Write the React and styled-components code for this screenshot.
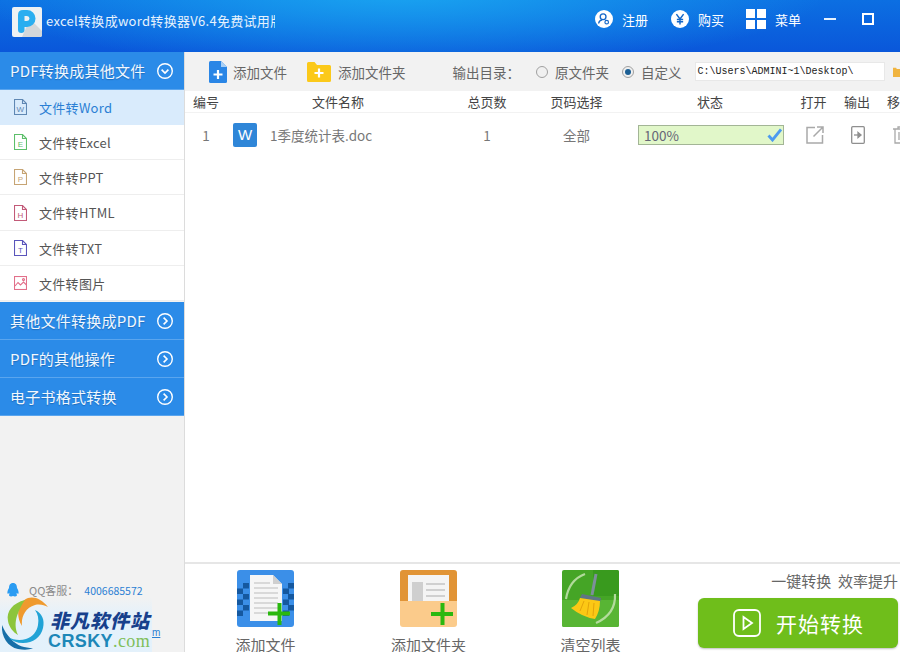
import React from "react";
import styled, { createGlobalStyle } from "styled-components";

const GlobalStyle = createGlobalStyle`
  html, body {
    margin: 0;
    padding: 0;
    background: #fff;
    overflow: hidden;
  }
  * {
    box-sizing: border-box;
  }
  body {
    font-family: "Noto Sans CJK SC", "Noto Sans", sans-serif;
  }
`;

const Window = styled.div`
  position: relative;
  width: 900px;
  height: 652px;
  overflow: hidden;
  display: flex;
  flex-direction: column;
`;

const TitleBar = styled.header`
  height: 52px;
  flex: none;
  display: flex;
  align-items: flex-start;
  padding: 7px 0 0 12px;
  color: #fff;
  background: radial-gradient(ellipse 430px 80px at 400px -10px, #1aa6f1 0%, rgba(26, 166, 241, 0) 100%),
    linear-gradient(180deg, #0c6fe2 0%, #0a57da 100%);
`;

const AppLogo = styled.div`
  width: 30px;
  height: 30px;
  flex: none;
`;

const AppTitle = styled.div`
  width: 229px;
  margin: 5px 0 0 4px;
  font-size: 13px;
  line-height: 18px;
  letter-spacing: 0.3px;
  white-space: nowrap;
  overflow: hidden;
  color: #e6f2fd;
`;

const TitleActions = styled.div`
  margin-left: auto;
  display: flex;
  align-items: center;
  height: 24px;
`;

const TitleAction = styled.div`
  display: flex;
  align-items: center;
  gap: 9px;
  font-size: 13px;
  margin-right: ${(p) => p.$after}px;
`;

const Body = styled.div`
  flex: 1;
  display: flex;
  min-height: 0;
`;

const Sidebar = styled.aside`
  width: 185px;
  flex: none;
  background: #f2f2f2;
  border-right: 1px solid #dcdcdc;
`;

const GroupHead = styled.div`
  height: 38px;
  display: flex;
  align-items: center;
  justify-content: space-between;
  padding: 0 10px 0 10px;
  background: #2b8be8;
  border-bottom: 1px solid #5aa5ee;
  color: #f2f8fe;
  font-size: 15px;
  letter-spacing: 0.25px;
  text-shadow: 0 1px 1px rgba(0, 50, 110, 0.35);
`;

const NavItem = styled.div`
  height: ${(p) => (p.$tall ? 36 : 35)}px;
  display: flex;
  align-items: center;
  gap: 12px;
  padding-left: 14px;
  font-size: 13px;
  letter-spacing: 0.3px;
  color: ${(p) => (p.$active ? "#2b7fd4" : "#555")};
  background: ${(p) => (p.$active ? "#d9ebfc" : "#fff")};
  border-bottom: 1px solid ${(p) => (p.$active ? "#d9ebfc" : "#eeeeee")};
`;

const NavGap = styled.div`
  height: 1px;
`;

const Main = styled.main`
  flex: 1;
  min-width: 0;
  display: flex;
  flex-direction: column;
  background: #fff;
`;

const Toolbar = styled.div`
  height: 39px;
  flex: none;
  display: flex;
  align-items: center;
  padding-left: 24px;
  background: #f2f2f2;
  font-size: 13.5px;
  color: #666;
  white-space: nowrap;
`;

const ToolButton = styled.div`
  display: flex;
  align-items: center;
  gap: ${(p) => p.$gap}px;
  margin-right: ${(p) => p.$after}px;
`;

const RadioOption = styled.div`
  display: flex;
  align-items: center;
  gap: 7px;
  margin-right: ${(p) => p.$after}px;
`;

const Radio = styled.span`
  width: 12px;
  height: 12px;
  flex: none;
  border-radius: 50%;
  border: 1px solid #a0a0a0;
  background: #f0f0f0;
  display: flex;
  align-items: center;
  justify-content: center;
  &::after {
    content: "";
    width: 6px;
    height: 6px;
    border-radius: 50%;
    background: ${(p) => (p.$on ? "#1c5f94" : "transparent")};
  }
`;

const PathInput = styled.div`
  width: 190px;
  height: 19px;
  flex: none;
  margin-right: 8px;
  padding-left: 2px;
  background: #fff;
  border: 1px solid #e8e8e8;
  font-family: "Liberation Mono", monospace;
  font-size: 10px;
  line-height: 17px;
  color: #222;
`;

const Row = styled.div`
  display: grid;
  grid-template-columns: 42px 222px 76px 103px 164px 43px 44px 21px;
  align-items: center;
  justify-items: center;
  white-space: nowrap;
`;

const HeadRow = styled(Row)`
  height: 22px;
  flex: none;
  font-size: 13px;
  color: #444;
  border-bottom: 1px solid #f2f2f2;
`;

const LastHead = styled.span`
  justify-self: start;
  margin-left: 8px;
`;

const FileRow = styled(Row)`
  height: 44px;
  flex: none;
  font-size: 13.5px;
  color: #777;
`;

const NameCell = styled.div`
  justify-self: start;
  display: flex;
  align-items: center;
  gap: 13px;
  padding-left: 6px;
`;

const WordBadge = styled.div`
  width: 24px;
  height: 24px;
  border-radius: 2px;
  background: #2f86d8;
  color: #fff;
  font-family: "Liberation Sans", sans-serif;
  font-size: 15px;
  line-height: 24px;
  text-align: center;
`;

const Progress = styled.div`
  width: 146px;
  height: 20px;
  margin-left: 2px;
  padding: 0 1px 0 5px;
  display: flex;
  align-items: center;
  justify-content: space-between;
  background: #e1f7c9;
  border: 1px solid #a3b596;
  color: #667;
  font-size: 13.5px;
`;

const RowIcon = styled.div`
  display: flex;
  margin-left: 2px;
`;

const TrashCell = styled.div`
  display: flex;
  justify-self: start;
  margin-left: 14px;
`;

const Spacer = styled.div`
  flex: 1;
`;

const Footer = styled.div`
  height: 90px;
  flex: none;
  display: flex;
  border-top: 2px solid #e6e6e6;
`;

const FooterTool = styled.div`
  width: 57px;
  margin-left: ${(p) => p.$left}px;
  flex: none;
  display: flex;
  flex-direction: column;
  align-items: center;
  gap: 7px;
  padding-top: 6px;
  font-size: 15px;
  line-height: 22px;
  color: #666;
  white-space: nowrap;
  svg {
    flex: none;
  }
`;

const StartColumn = styled.div`
  margin-left: auto;
  width: 202px;
  flex: none;
  display: flex;
  flex-direction: column;
  align-items: flex-end;
  padding: 7px 2px 0 0;
`;

const Slogan = styled.div`
  font-size: 15px;
  line-height: 20px;
  color: #666;
  white-space: nowrap;
  margin-bottom: 7px;
`;

const StartButton = styled.div`
  width: 200px;
  height: 50px;
  border-radius: 6px;
  background: #6fbe1b;
  box-shadow: 0 1px 2px rgba(0, 0, 0, 0.25);
  color: #fff;
  font-size: 21px;
  letter-spacing: 1px;
  display: flex;
  align-items: center;
  justify-content: center;
  gap: 15px;
  padding-left: 1px;
`;

const QQLine = styled.div`
  position: absolute;
  left: 6px;
  top: 582px;
  display: flex;
  align-items: center;
  gap: 8px;
  font-size: 11px;
  color: #8a8a8a;
  white-space: nowrap;
`;

const QQLabel = styled.span`
  margin: 0 -2px 0 1px;
`;

const QQNumber = styled.span`
  font-size: 10.5px;
  color: #2b7fd4;
`;

const Watermark = styled.div`
  position: absolute;
  left: 0;
  top: 597px;
  width: 152px;
  height: 55px;
  background: linear-gradient(180deg, rgba(226, 241, 252, 0) 0%, rgba(226, 241, 252, 0.9) 35%);
`;

const WatermarkSwirl = styled.svg`
  position: absolute;
  left: 0;
  top: 0;
`;

const WatermarkName = styled.div`
  position: absolute;
  left: 50px;
  top: 12px;
  font-size: 19px;
  line-height: 22px;
  font-weight: 900;
  font-style: italic;
  letter-spacing: 1px;
  color: #17408c;
  white-space: nowrap;
`;

const WatermarkDomain = styled.div`
  position: absolute;
  left: 48px;
  top: 34px;
  font-family: "Liberation Sans", sans-serif;
  font-size: 18px;
  line-height: 20px;
  font-weight: 700;
  letter-spacing: 0.4px;
  color: #1d87b8;
  white-space: nowrap;
`;

const DomainTail = styled.span`
  font-family: "Liberation Serif", serif;
  font-size: 18px;
  font-weight: 400;
  color: #7fbf5a;
`;

const LinkTail = styled.span`
  position: absolute;
  left: 152px;
  top: 627px;
  font-family: "Liberation Sans", sans-serif;
  font-size: 10px;
  line-height: 12px;
  color: #2b7fd4;
  text-decoration: underline;
`;

function Chevron({ down }) {
  return (
    <svg width="18" height="18" viewBox="0 0 18 18" fill="none" stroke="#fff" strokeWidth="1.4">
      <circle cx="9" cy="9" r="7.3" />
      <path d={down ? "M5.6 7.6 9 11l3.4-3.4" : "M7.6 5.6 11 9l-3.4 3.4"} strokeWidth="1.6" />
    </svg>
  );
}

function NavFile({ color, letter }) {
  return (
    <svg width="13" height="16" viewBox="0 0 13 16" fill="none" stroke={color} strokeWidth="1.1">
      <path d="M.5.5h8l4 4v11H.5z" />
      <path d="M8.500.5v4h4" />
      <text
        x="6.500"
        y="12.500"
        fontSize="8"
        fontFamily="Liberation Sans, sans-serif"
        textAnchor="middle"
        fill={color}
        stroke="none"
      >
        {letter}
      </text>
    </svg>
  );
}

function NavPicture() {
  return (
    <svg width="13" height="14" viewBox="0 0 13 14" fill="none" stroke="#e2708a" strokeWidth="1.100">
      <rect x=".5" y=".5" width="12" height="13" />
      <path d="M1 10l3-3.500L6.500 9l3-3 3 3" />
      <circle cx="9.500" cy="3.600" r="1" />
    </svg>
  );
}

function AddFileIcon() {
  return (
    <svg width="18" height="22" viewBox="0 0 18 22">
      <path d="M0 1.500Q0 0 1.500 0H12l6 6v14.500q0 1.500-1.500 1.500h-15Q0 22 0 20.500z" fill="#2a86e6" />
      <path d="M12 0l6 6h-6z" fill="#a9d0f6" />
      <path d="M9 9v9M4.500 13.500h9" stroke="#fff" strokeWidth="2.200" />
    </svg>
  );
}

function AddFolderIcon() {
  return (
    <svg width="24" height="20" viewBox="0 0 24 20">
      <path d="M0 1.500Q0 0 1.500 0h6l2.500 3h12.500Q24 3 24 4.500v14q0 1.500-1.500 1.500h-21Q0 20 0 18.500z" fill="#fbc91a" />
      <path d="M12 6.500v9M7.500 11h9" stroke="#fff" strokeWidth="2.200" />
    </svg>
  );
}

function AppMark() {
  return (
    <svg width="30" height="30" viewBox="0 0 30 30">
      <rect width="30" height="30" rx="2" fill="#eef1f3" />
      <path d="M18 12l12 12v4q0 2-2 2H10z" fill="#d3d7da" />
      <path
        d="M6 8q0-5 5-5h4a8.500 8.500 0 0 1 0 17h-2.500v3q0 3-3.200 3T6 23zM12.500 9v5H15a2.500 2.500 0 0 0 0-5z"
        fill="#2aaef0"
        fillRule="evenodd"
      />
    </svg>
  );
}

function UserIcon() {
  return (
    <svg width="18" height="18" viewBox="0 0 20 20">
      <circle cx="10" cy="10" r="10" fill="#fff" />
      <circle cx="9" cy="7.500" r="3.200" fill="none" stroke="#1467c8" strokeWidth="1.500" />
      <path d="M4 15q.5-3.500 4-4" fill="none" stroke="#1467c8" strokeWidth="1.500" />
      <circle cx="13" cy="13.500" r="2" fill="none" stroke="#1467c8" strokeWidth="1.300" />
    </svg>
  );
}

function YenIcon() {
  return (
    <svg width="18" height="18" viewBox="0 0 20 20">
      <circle cx="10" cy="10" r="10" fill="#fff" />
      <path
        d="M6 4.500l4 5.500 4-5.500M10 10v6M6.500 10.500h7M6.500 13h7"
        fill="none"
        stroke="#1467c8"
        strokeWidth="1.600"
      />
    </svg>
  );
}

function MenuIcon() {
  return (
    <svg width="20" height="20" viewBox="0 0 20 20" fill="#fff">
      <rect width="9" height="9" />
      <rect x="11" width="9" height="9" />
      <rect y="11" width="9" height="9" />
      <rect x="11" y="11" width="9" height="9" />
    </svg>
  );
}

function MinimizeIcon() {
  return (
    <svg width="12" height="12" viewBox="0 0 12 12">
      <path d="M0 6h12" stroke="#e8f2fd" strokeWidth="2" />
    </svg>
  );
}

function MaximizeIcon() {
  return (
    <svg width="12" height="12" viewBox="0 0 12 12" fill="none">
      <rect x="1" y="1" width="10" height="10" stroke="#fff" strokeWidth="2" />
    </svg>
  );
}

function OpenIcon() {
  return (
    <svg width="18" height="18" viewBox="0 0 18 18" fill="none" stroke="#a9a9a9" strokeWidth="1.500">
      <path d="M9 1.500H1v15.500h15.500V9" />
      <path d="M7.500 10.500 16.500 1.500M11 1h6v6" />
    </svg>
  );
}

function OutputIcon() {
  return (
    <svg width="14" height="18" viewBox="0 0 14 18" fill="none" stroke="#8f8f8f" strokeWidth="1.300">
      <rect x=".7" y=".7" width="12.600" height="16.600" rx="1" />
      <path d="M3 9h6.500" />
      <path d="M7 6.500 10 9l-3 2.500z" fill="#8f8f8f" />
    </svg>
  );
}

function TrashIcon() {
  return (
    <svg width="16" height="18" viewBox="0 0 16 18" fill="none" stroke="#a9a9a9" strokeWidth="1.300">
      <path d="M5 2.500V1h6v1.500M0 3h16M2 3v14h12V3M6 6v8M10 6v8" />
    </svg>
  );
}

function CheckMark() {
  return (
    <svg width="15" height="14" viewBox="0 0 15 14" fill="none">
      <path d="M1.500 7.500 5.500 12 14 1.500" stroke="#4d9bf0" strokeWidth="2.800" />
    </svg>
  );
}

function PlayIcon() {
  return (
    <svg width="28" height="28" viewBox="0 0 28 28" fill="none" stroke="#fff" strokeWidth="1.800">
      <rect x="1" y="1" width="26" height="26" rx="5" />
      <path d="M10.500 8v12l8.500-6z" />
    </svg>
  );
}

function BigAddFile() {
  const checks = [];
  for (let row = 0; row < 6; row++) {
    const y = 13 + row * 5.500;
    for (const x of [row % 2 ? 0 : 6, row % 2 ? 46 : 51]) {
      checks.push(<rect key={`${row}-${x}`} x={x} y={y} width="6" height="5.500" fill="#15589f" />);
    }
  }
  return (
    <svg width="57" height="57" viewBox="0 0 57 57">
      <rect width="57" height="57" rx="3" fill="#3b8fe8" />
      {checks}
      <path d="M13 5h23l9 9v37H13z" fill="#f6f6f6" />
      <path d="M36 5l9 9h-9z" fill="#cfcfcf" />
      <path
        d="M17 13h16M17 18h24M17 23h24M17 28h24M17 33h24M17 38h24M17 43h14"
        stroke="#cfcfcf"
        strokeWidth="1.400"
      />
      <path d="M42.500 33v22M31 43.500h22" stroke="#2ab80f" strokeWidth="4" />
    </svg>
  );
}

function BigAddFolder() {
  return (
    <svg width="57" height="57" viewBox="0 0 57 57">
      <path d="M0 3q0-3 3-3h51q3 0 3 3v32H0z" fill="#e19436" />
      <rect x="8" y="5" width="41" height="30" fill="#f4f4f4" />
      <rect x="12" y="12" width="11" height="21" fill="#cfcfcf" />
      <path d="M26 14h19M26 20h19M26 26h19M26 32h19" stroke="#c4c4c4" strokeWidth="1.500" />
      <path d="M0 31h57v23q0 3-3 3H3q-3 0-3-3z" fill="#fbcb8b" />
      <path d="M42.500 33v22M31 44h22" stroke="#2ab80f" strokeWidth="4" />
    </svg>
  );
}

function BigBroom() {
  return (
    <svg width="57" height="57" viewBox="0 0 57 57">
      <rect width="57" height="57" rx="2" fill="#45a526" />
      <path d="M31 0h24q2 0 2 2v24H31z" fill="#399a1e" />
      <path d="M0 30h57v25q0 2-2 2H2q-2 0-2-2z" fill="#58b534" />
      <path d="M23 4Q7 10 4 29M53 24q1 20-19 29" fill="none" stroke="#c4e3b0" strokeWidth="2.200" opacity=".85" />
      <path d="M34 4 30 25" stroke="#7d8f9b" strokeWidth="3" />
      <path d="M20 24l19 4-1 4-20-4z" fill="#5f7684" />
      <path d="M18 28l20 3q0 10-5 18Q20 47 9 38q7-3 9-10z" fill="#fcc815" />
      <path d="M22 31l-4 10M27 32l-2 13M32 33l-1 13" stroke="#e3a40a" strokeWidth="1" />
    </svg>
  );
}

function QQIcon() {
  return (
    <svg width="14" height="14" viewBox="0 0 14 14">
      <path
        d="M7 0c3 0 4 2.500 4 5 1 1.500 2 4 1.500 5.500-.5.500-1.300 0-1.800-.8C10.500 11 11 12 11 12.500 10 13.800 8 13.500 7 13c-1 .5-3 .8-4-.5 0-.5.500-1.500.3-2.800-.5.800-1.300 1.300-1.800.8C1 9 2 6.500 3 5c0-2.500 1-5 4-5z"
        fill="#2b9cf2"
      />
    </svg>
  );
}

function Swirl() {
  return (
    <WatermarkSwirl width="60" height="55" viewBox="0 0 60 55" fill="none">
      <path d="M48 10C42 2 34-1 28 1 18 5 15 18 22 29 21 20 25 11 35 8c5-1 9 0 13 2z" fill="#ef9a2e" />
      <path d="M25 3C13 6 6 14 8 24c1 6 5 11 10 14-3-6-3-13-1-19 2-6 5-12 8-16z" fill="#8cc53c" />
      <path d="M2 28c-1 12 6 22 16 24 6 1 11 1 15-1-8 0-16-2-22-9-4-4-7-9-9-14z" fill="#176fa8" />
      <path d="M35 13c7 3 10 10 8 18-2 9-10 15-20 15-6 0-11-2-15-6 5 3 12 4 18 2 7-2 11-8 12-14 1-6 0-11-3-15z" fill="#21a3d6" />
    </WatermarkSwirl>
  );
}

const navItems = [
  { label: "文件转Word", color: "#5f87b3", letter: "W", active: true },
  { label: "文件转Excel", color: "#5cbf6a", letter: "E" },
  { label: "文件转PPT", color: "#c6a474", letter: "P" },
  { label: "文件转HTML", color: "#c25a78", letter: "H", tall: true },
  { label: "文件转TXT", color: "#5a55bb", letter: "T" },
];

export default function App() {
  return (
    <Window>
      <GlobalStyle />
      <TitleBar>
        <AppLogo>
          <AppMark />
        </AppLogo>
        <AppTitle>excel转换成word转换器V6.4免费试用版</AppTitle>
        <TitleActions>
          <TitleAction $after={23}>
            <UserIcon />
            注册
          </TitleAction>
          <TitleAction $after={22}>
            <YenIcon />
            购买
          </TitleAction>
          <TitleAction $after={23}>
            <MenuIcon />
            菜单
          </TitleAction>
          <TitleAction $after={26}>
            <MinimizeIcon />
          </TitleAction>
          <TitleAction $after={26}>
            <MaximizeIcon />
          </TitleAction>
        </TitleActions>
      </TitleBar>
      <Body>
        <Sidebar>
          <GroupHead>
            PDF转换成其他文件
            <Chevron down />
          </GroupHead>
          {navItems.map((item) => (
            <NavItem key={item.label} $active={item.active} $tall={item.tall}>
              <NavFile color={item.color} letter={item.letter} />
              {item.label}
            </NavItem>
          ))}
          <NavItem>
            <NavPicture />
            文件转图片
          </NavItem>
          <NavGap />
          <GroupHead>
            其他文件转换成PDF
            <Chevron />
          </GroupHead>
          <GroupHead>
            PDF的其他操作
            <Chevron />
          </GroupHead>
          <GroupHead>
            电子书格式转换
            <Chevron />
          </GroupHead>
        </Sidebar>
        <Main>
          <Toolbar>
            <ToolButton $gap={6} $after={20}>
              <AddFileIcon />
              添加文件
            </ToolButton>
            <ToolButton $gap={7} $after={47}>
              <AddFolderIcon />
              添加文件夹
            </ToolButton>
            <ToolButton $gap={0} $after={16}>
              输出目录：
            </ToolButton>
            <RadioOption $after={13}>
              <Radio />
              原文件夹
            </RadioOption>
            <RadioOption $after={13}>
              <Radio $on />
              自定义
            </RadioOption>
            <PathInput>{"C:\\Users\\ADMINI~1\\Desktop\\"}</PathInput>
            <svg width="12" height="16" viewBox="0 0 12 16">
              <path d="M0 1h5l1 2h6v13H0z" fill="#f0b440" />
            </svg>
          </Toolbar>
          <HeadRow>
            <span>编号</span>
            <span>文件名称</span>
            <span>总页数</span>
            <span>页码选择</span>
            <span>状态</span>
            <span>打开</span>
            <span>输出</span>
            <LastHead>移</LastHead>
          </HeadRow>
          <FileRow>
            <span>1</span>
            <NameCell>
              <WordBadge>W</WordBadge>
              1季度统计表.doc
            </NameCell>
            <span>1</span>
            <span>全部</span>
            <Progress>
              100%
              <CheckMark />
            </Progress>
            <RowIcon>
              <OpenIcon />
            </RowIcon>
            <RowIcon>
              <OutputIcon />
            </RowIcon>
            <TrashCell>
              <TrashIcon />
            </TrashCell>
          </FileRow>
          <Spacer />
          <Footer>
            <FooterTool $left={52}>
              <BigAddFile />
              添加文件
            </FooterTool>
            <FooterTool $left={106}>
              <BigAddFolder />
              添加文件夹
            </FooterTool>
            <FooterTool $left={105}>
              <BigBroom />
              清空列表
            </FooterTool>
            <StartColumn>
              <Slogan>一键转换&nbsp;&nbsp;效率提升</Slogan>
              <StartButton>
                <PlayIcon />
                开始转换
              </StartButton>
            </StartColumn>
          </Footer>
        </Main>
      </Body>
      <QQLine>
        <QQIcon />
        <QQLabel>QQ客服：</QQLabel>
        <QQNumber>4006685572</QQNumber>
      </QQLine>
      <Watermark>
        <Swirl />
        <WatermarkName>非凡软件站</WatermarkName>
        <WatermarkDomain>
          CRSKY<DomainTail>.com</DomainTail>
        </WatermarkDomain>
      </Watermark>
      <LinkTail>m</LinkTail>
    </Window>
  );
}
